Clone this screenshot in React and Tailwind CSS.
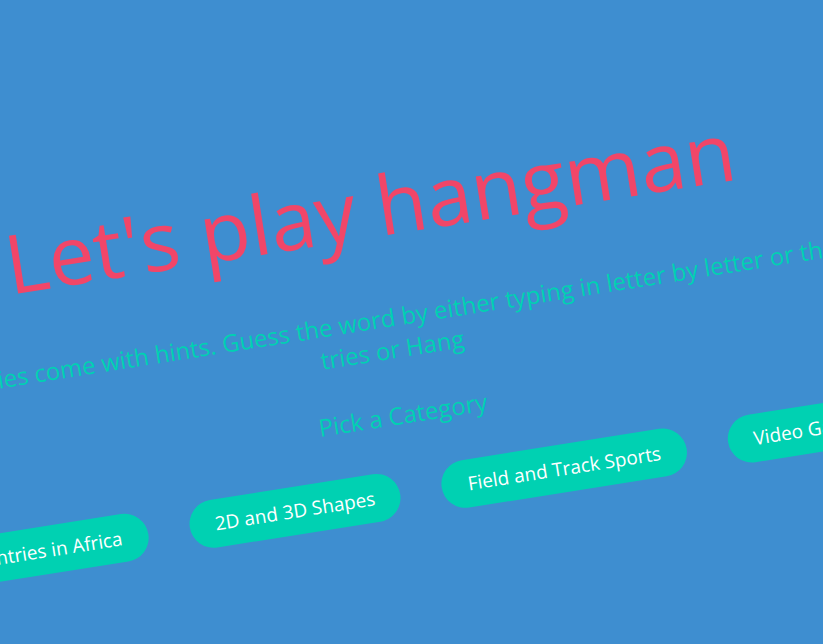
export default function App() {
  const categories = [
    "Countries in Africa",
    "2D and 3D Shapes",
    "Field and Track Sports",
    "Video Games",
  ];

  return (
    <div className="h-screen w-full overflow-hidden bg-[#3e8ed0] font-['Open_Sans',sans-serif]">
      {/* whole landing block is tilted */}
      <div className="w-[1500px] ml-[-388px] mt-[157px] origin-top -rotate-9 flex flex-col items-center text-center">
        <h1 className="text-[82px] leading-[98px] font-normal text-[#f14668]">
          Let's play hangman
        </h1>

        <p className="mt-[49px] text-2xl text-[#00d1b2]">
          Hi! Welcome! All the categories come with hints. Guess the word by either typing in letter by letter or the whole word. You get 6
          <br />
          tries or Hang
        </p>

        <h3 className="mt-[34px] text-2xl text-[#00d1b2]">Pick a Category</h3>

        <div className="mt-[38px] flex items-center gap-[42px]">
          {categories.map((c) => (
            <button
              key={c}
              type="button"
              className="rounded-full bg-[#00d1b2] px-[26px] py-2.5 text-[19px] leading-7 text-white"
            >
              {c}
            </button>
          ))}
        </div>
      </div>
    </div>
  );
}
